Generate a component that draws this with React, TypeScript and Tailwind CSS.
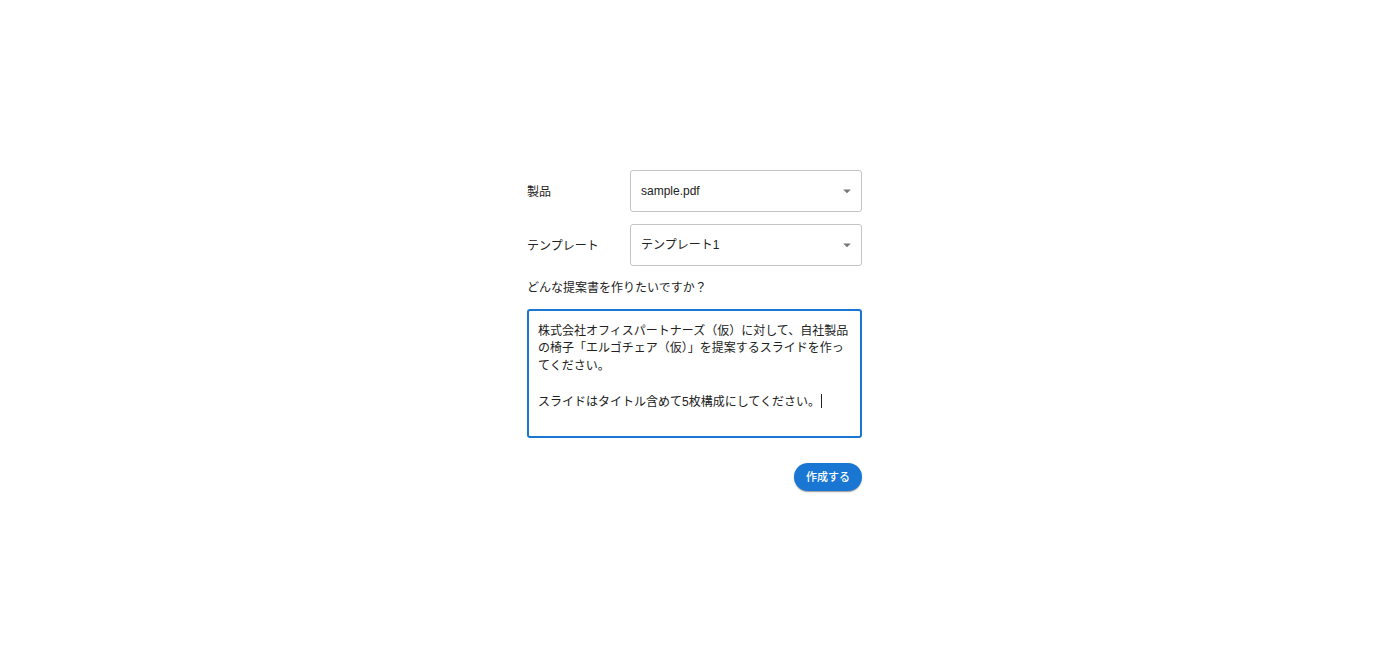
import { useState } from "react";

const font = { fontFamily: '"Liberation Sans", "Noto Sans CJK JP", sans-serif' };

function SelectBox({ value }: { value: string }) {
  return (
    <div className="flex h-[42px] w-[232px] items-center justify-between rounded-[3px] border border-[#c4c4c4] bg-white pl-[10px] pr-[5px] text-[12px] text-[#212121]">
      <span>{value}</span>
      <svg viewBox="0 0 24 24" className="h-[18px] w-[18px] fill-[#757575]">
        <path d="M7 10l5 5 5-5z" />
      </svg>
    </div>
  );
}

export default function App() {
  const [product] = useState("sample.pdf");
  const [template] = useState("テンプレート1");

  return (
    <div className="min-h-screen bg-white" style={font}>
      <div className="flex justify-center pr-[11px] pt-[170px]">
        <div className="flex w-[335px] flex-col">
          {/* Product */}
          <div className="flex items-center">
            <span className="w-[103px] pt-px text-[12px] text-[#212121]">製品</span>
            <SelectBox value={product} />
          </div>

          {/* Template */}
          <div className="mt-[12px] flex items-center">
            <span className="w-[103px] pt-px text-[12px] text-[#212121]">テンプレート</span>
            <SelectBox value={template} />
          </div>

          <p className="mt-[14px] text-[12px] leading-[17px] text-[#212121]">
            どんな提案書を作りたいですか？
          </p>

          {/* Prompt (focused textarea) */}
          <div className="mt-[12px] h-[129px] rounded-[3px] border-2 border-[#1976d2] px-[9px] pt-[12px] text-[12px] leading-[17.25px] text-[#212121]">
            <p>
              株式会社オフィスパートナーズ（仮）に対して、自社製品の椅子「エルゴチェア（仮）」を提案するスライドを作ってください。
            </p>
            <p>&nbsp;</p>
            <p>
              スライドはタイトル含めて5枚構成にしてください。
              <span className="ml-[1px] inline-block h-[14px] w-px translate-y-[2px] bg-[#212121]" />
            </p>
          </div>

          <div className="mt-[25px] flex justify-end">
            <button className="h-[28px] rounded-full bg-[#1976d2] px-[12px] text-[11px] font-medium text-white shadow-[0_2px_1px_-1px_rgba(0,0,0,0.2),0_1px_1px_0_rgba(0,0,0,0.14),0_1px_3px_0_rgba(0,0,0,0.12)]">
              作成する
            </button>
          </div>
        </div>
      </div>
    </div>
  );
}
